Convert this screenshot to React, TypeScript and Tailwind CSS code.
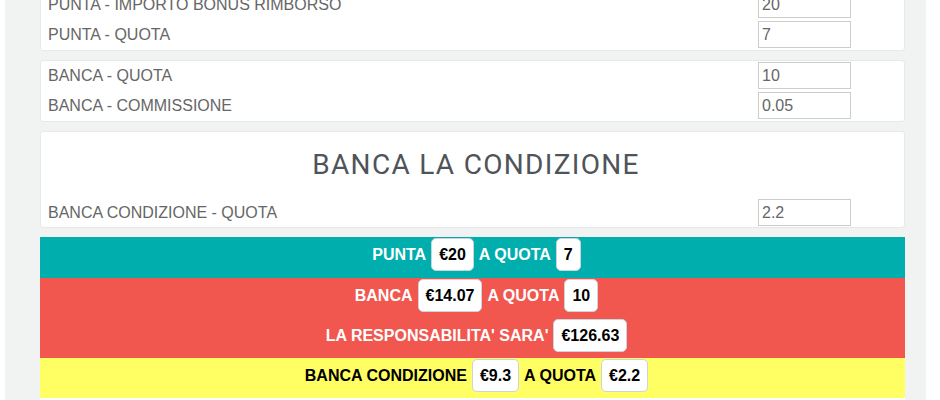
const puntaRows = [
  { label: "PUNTA - IMPORTO BONUS RIMBORSO", value: "20" },
  { label: "PUNTA - QUOTA", value: "7" },
];

const bancaRows = [
  { label: "BANCA - QUOTA", value: "10" },
  { label: "BANCA - COMMISSIONE", value: "0.05" },
];

function Field({ label, value }: { label: string; value: string }) {
  return (
    <div className="flex h-[27px] items-center justify-between pr-[53px]">
      <span className="text-[16px] text-[#666]">{label}</span>
      <input
        readOnly
        value={value}
        className="h-[27px] w-[93px] border border-[#cdcdcd] bg-white pl-[3px] text-[16px] text-[#666] outline-none"
      />
    </div>
  );
}

function Card({ children, className = "" }: { children: React.ReactNode; className?: string }) {
  return (
    <div
      className={`flex flex-col gap-[3px] rounded-[3px] border border-[#e7e8e8] bg-white pb-[2px] pl-[7px] pt-[1px] ${className}`}
    >
      {children}
    </div>
  );
}

function Badge({ children }: { children: React.ReactNode }) {
  return (
    <span className="flex h-[33px] items-center rounded-[5px] border border-[#c9d4de] bg-white px-[7px] font-bold text-black">
      {children}
    </span>
  );
}

function Line({ children, tall = false }: { children: React.ReactNode; tall?: boolean }) {
  return (
    <div className={`flex items-start justify-center gap-[5px] pl-[8px] pt-px ${tall ? "h-[41px]" : "h-[40px]"}`}>
      {children}
    </div>
  );
}

export default function App() {
  return (
    <div className="h-[400px] overflow-hidden bg-white pl-[5px] pr-[14px] font-['Liberation_Sans',Arial,sans-serif]">
      <div className="flex h-full flex-col gap-[9px] bg-[#f1f2f2] pl-[35px] pr-[21px]">
        <Card className="-mt-[11px]">
          {puntaRows.map((r) => (
            <Field key={r.label} {...r} />
          ))}
        </Card>

        <Card>
          {bancaRows.map((r) => (
            <Field key={r.label} {...r} />
          ))}
        </Card>

        <div className="rounded-[3px] border border-[#e7e8e8] bg-white pb-[1px] pl-[7px] pt-[17px]">
          <h3 className="mb-[19px] h-[31px] text-center font-['Roboto',sans-serif] text-[28px] font-normal leading-[31px] tracking-[1.3px] text-[#4f545a]">
            BANCA LA CONDIZIONE
          </h3>
          <Field label="BANCA CONDIZIONE - QUOTA" value="2.2" />
        </div>

        <div className="flex flex-col text-[16px] font-bold">
          <div className="bg-[#00aeae] text-white">
            <Line tall>
              <span className="leading-[33px]">PUNTA</span>
              <Badge>€20</Badge>
              <span className="leading-[33px]">A QUOTA</span>
              <Badge>7</Badge>
            </Line>
          </div>
          <div className="bg-[#f1574f] text-white">
            <Line>
              <span className="leading-[33px]">BANCA</span>
              <Badge>€14.07</Badge>
              <span className="leading-[33px]">A QUOTA</span>
              <Badge>10</Badge>
            </Line>
            <Line>
              <span className="leading-[33px]">LA RESPONSABILITA' SARA'</span>
              <Badge>€126.63</Badge>
            </Line>
          </div>
          <div className="bg-[#fffe62] text-black">
            <Line>
              <span className="leading-[33px]">BANCA CONDIZIONE</span>
              <Badge>€9.3</Badge>
              <span className="leading-[33px]">A QUOTA</span>
              <Badge>€2.2</Badge>
            </Line>
          </div>
          <div className="h-[40px] bg-white" />
        </div>
      </div>
    </div>
  );
}
